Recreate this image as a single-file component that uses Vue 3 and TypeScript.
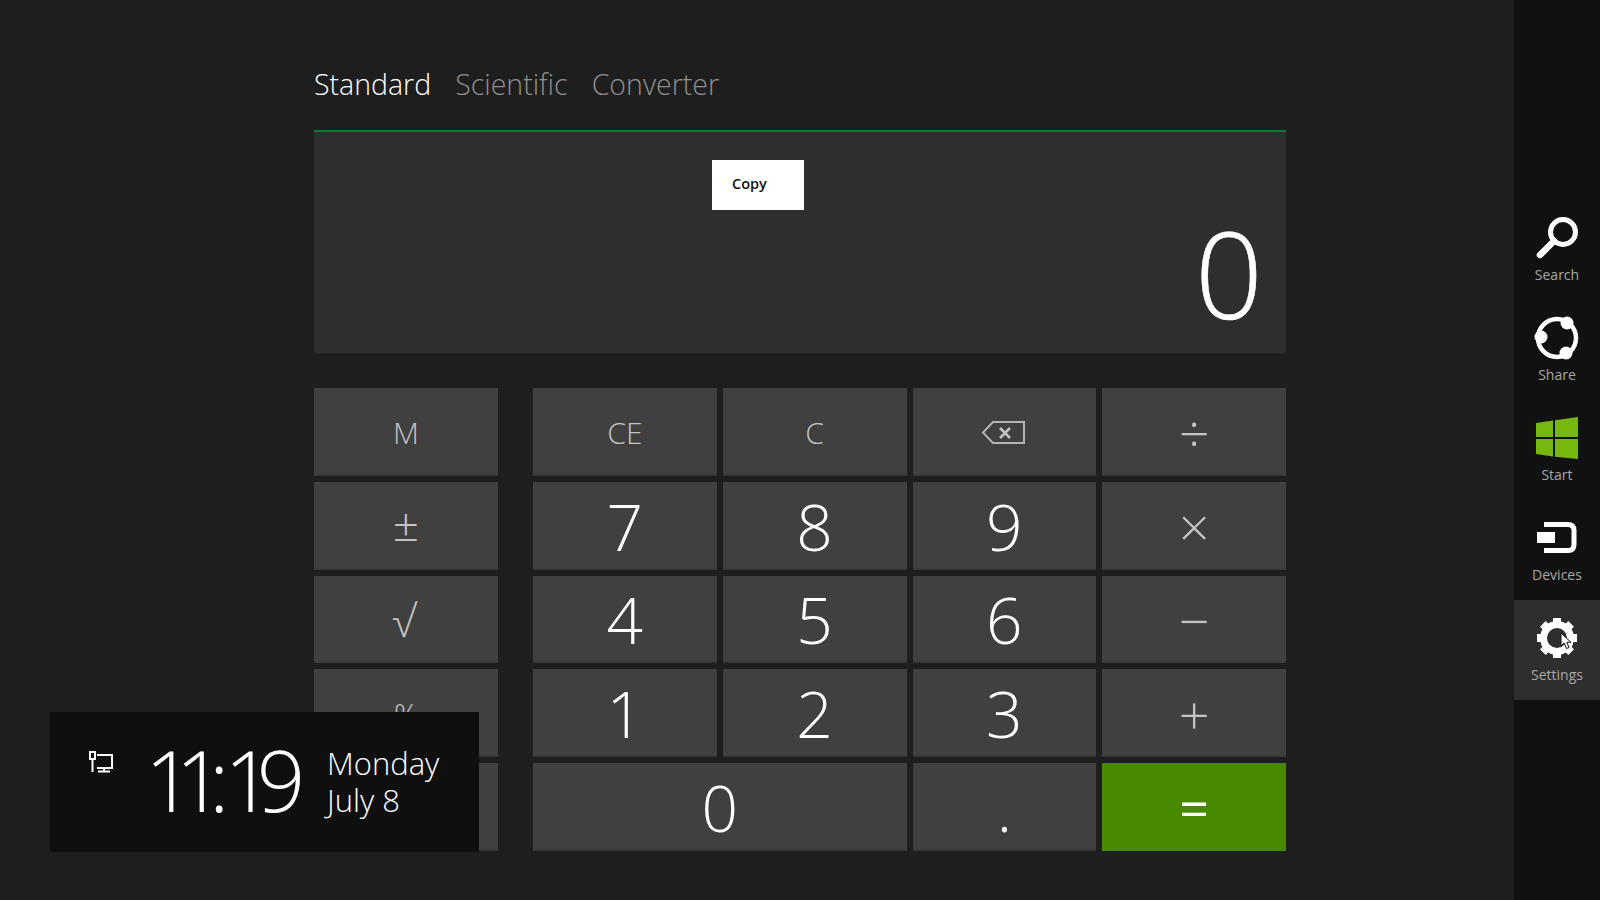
<template>
  <div class="screen">
    <div class="app-area">
      <nav class="tabs">
        <span v-for="(t, i) in tabs" :key="t" class="tab" :class="{ active: i === 0 }">{{ t }}</span>
      </nav>

      <section class="display">
        <div class="copy-menu">Copy</div>
        <div class="value">0</div>
      </section>

      <div class="keypad">
        <div class="memory">
          <button v-for="(k, i) in memoryKeys" :key="i" class="key op" :class="memoryClass(k)">{{ k }}</button>
        </div>
        <div class="main-keys">
          <button
            v-for="k in mainKeys"
            :key="k.label"
            class="key"
            :class="[k.kind, { wide: k.label === '0' }]"
          >
            <svg v-if="k.label === 'back'" class="back-icon" viewBox="0 0 44 24" width="44" height="24">
              <path d="M43 2H12L2 12.500 12 23H43Z" fill="none" stroke="#b4b4b4" stroke-width="2" />
              <path d="M19 8l10 10M29 8L19 18" fill="none" stroke="#c4c4c4" stroke-width="2.500" />
            </svg>
            <template v-else>{{ k.label }}</template>
          </button>
        </div>
      </div>
    </div>

    <aside class="charms">
      <div v-for="c in charms" :key="c" class="charm" :class="{ hover: c === 'Settings' }">
        <svg viewBox="0 0 50 50" width="50" height="50" class="charm-icon">
          <g v-if="c === 'Search'">
            <circle cx="31" cy="18" r="12.500" fill="none" stroke="#fff" stroke-width="5" />
            <path d="M22 27L8 41" stroke="#fff" stroke-width="6.500" stroke-linecap="round" />
          </g>
          <g v-else-if="c === 'Share'">
            <circle cx="25" cy="24" r="19" fill="none" stroke="#fff" stroke-width="4.500" />
            <circle cx="35" cy="9" r="6.500" fill="#fff" />
            <circle cx="9" cy="23" r="6.500" fill="#fff" />
            <circle cx="34" cy="39" r="6.500" fill="#fff" />
          </g>
          <g v-else-if="c === 'Start'" fill="#76b80f">
            <path d="M4 9L21 6.500V23H4Z" />
            <path d="M23 6.200L46 3V23H23Z" />
            <path d="M4 25H21V42.500L4 40Z" />
            <path d="M23 25H46V45L23 42.800Z" />
          </g>
          <g v-else-if="c === 'Devices'">
            <path d="M12 10.500H36Q42 10.500 42 16.500V30.500Q42 36.500 36 36.500H12" fill="none" stroke="#fff" stroke-width="5" />
            <rect x="5" y="18" width="18" height="11" fill="#fff" />
          </g>
          <g v-else>
            <circle cx="25" cy="24" r="13.500" fill="none" stroke="#fff" stroke-width="7" />
            <rect
              v-for="a in gearTeeth"
              :key="a"
              x="21"
              y="4"
              width="8"
              height="8"
              fill="#fff"
              :transform="`rotate(${a} 25 24)`"
            />
          </g>
        </svg>
        <span class="charm-label">{{ c }}</span>
        <svg v-if="c === 'Settings'" class="cursor" viewBox="0 0 12 18" width="12" height="18">
          <path d="M1 1V14L4.200 11 6.500 16.500 9 15.500 6.800 10.300H11Z" fill="#fff" stroke="#111" stroke-width="1" />
        </svg>
      </div>
    </aside>

    <div class="clock">
      <svg class="net-icon" viewBox="0 0 24 22" width="24" height="22">
        <rect x="1" y="1" width="5" height="7" fill="none" stroke="#fff" stroke-width="2" />
        <path d="M3.500 8V21M8 4H23V17H8M15 17V20M9 20.500H21" fill="none" stroke="#fff" stroke-width="2" />
      </svg>
      <div class="time"><span>11</span><span class="colon">:</span><span class="tail">19</span></div>
      <div class="date">
        <div>Monday</div>
        <div>July 8</div>
      </div>
    </div>
  </div>
</template>

<script setup lang="ts">
type Key = { label: string; kind: string }

const tabs = ['Standard', 'Scientific', 'Converter']
const memoryKeys = ['M', '±', '√', '%', '']
const gearTeeth = [0, 45, 90, 135, 180, 225, 270, 315]

const mainKeys: Key[] = [
  { label: 'CE', kind: 'op' },
  { label: 'C', kind: 'op' },
  { label: 'back', kind: 'op' },
  { label: '÷', kind: 'op sym' },
  { label: '7', kind: 'num' },
  { label: '8', kind: 'num' },
  { label: '9', kind: 'num' },
  { label: '×', kind: 'op sym' },
  { label: '4', kind: 'num' },
  { label: '5', kind: 'num' },
  { label: '6', kind: 'num' },
  { label: '−', kind: 'op sym' },
  { label: '1', kind: 'num' },
  { label: '2', kind: 'num' },
  { label: '3', kind: 'num' },
  { label: '+', kind: 'op sym' },
  { label: '0', kind: 'num' },
  { label: '.', kind: 'num' },
  { label: '=', kind: 'equals' },
]

const charms = ['Search', 'Share', 'Start', 'Devices', 'Settings']

function memoryClass(k: string) {
  if (k === '±') return 'plusminus'
  if (k === '√') return 'root'
  return ''
}
</script>

<style>
html,
body {
  margin: 0;
  background: #1e1e1e;
}
</style>

<style scoped>
.screen {
  position: relative;
  display: flex;
  width: 1600px;
  height: 900px;
  overflow: hidden;
  background: #1e1e1e;
  font-family: 'Open Sans', 'Liberation Sans', sans-serif;
  color: #fff;
}

.app-area {
  width: 972px;
  margin-left: 314px;
  margin-right: 228px;
}

.tabs {
  display: flex;
  gap: 24px;
  height: 130px;
  padding-top: 64px;
  box-sizing: border-box;
  font-size: 28.500px;
  font-weight: 300;
  line-height: 40px;
}

.tab {
  color: #8f8f8f;
}

.tab.active {
  color: #fff;
}

.display {
  position: relative;
  display: flex;
  justify-content: flex-end;
  align-items: flex-end;
  height: 223px;
  box-sizing: border-box;
  padding: 0 23px 20px 0;
  background: #2e2e2e;
  border-top: 2px solid #0c7a2c;
}

.copy-menu {
  position: absolute;
  left: 398px;
  top: 28px;
  width: 92px;
  height: 50px;
  box-sizing: border-box;
  padding-left: 20px;
  background: #fff;
  color: #111;
  font-size: 14.500px;
  font-weight: 600;
  line-height: 48px;
}

.value {
  font-size: 119px;
  font-weight: 300;
  line-height: 119px;
  -webkit-text-stroke: 0.6px #fff;
}

.keypad {
  display: flex;
  gap: 35px;
  margin-top: 35px;
}

.memory {
  display: grid;
  grid-auto-rows: 87.750px;
  gap: 6px;
  width: 184px;
}

.main-keys {
  display: grid;
  grid-template-columns: repeat(4, 1fr);
  grid-auto-rows: 87.750px;
  gap: 6px;
  width: 753px;
}

.key {
  display: flex;
  align-items: center;
  justify-content: center;
  padding: 3px 0 0;
  border: none;
  border-bottom: 2px solid #383838;
  background: #404040;
  font-family: inherit;
  font-weight: 300;
}

.key.op {
  color: #c4c4c4;
  font-size: 30px;
}

.key.plusminus {
  padding: 0 0 3px;
  font-size: 46px;
}

.key.root {
  padding: 3px 4px 0 0;
  font-size: 44px;
}

.key.sym {
  font-size: 54px;
}

.key.num {
  color: #fff;
  font-size: 64px;
}

.key.wide {
  grid-column: span 2;
}

.key.equals {
  padding: 0;
  background: #478a00;
  border-bottom: none;
  color: #fff;
  font-size: 52px;
  font-weight: 400;
}

.charms {
  display: flex;
  flex-direction: column;
  width: 86px;
  flex-shrink: 0;
  padding-top: 200px;
  box-sizing: border-box;
  background: #111;
}

.charm {
  position: relative;
  display: flex;
  flex-direction: column;
  align-items: center;
  height: 100px;
  padding-top: 14px;
  box-sizing: border-box;
}

.charm.hover {
  background: #2e2e2e;
}

.charm-icon {
  display: block;
}

.charm-label {
  margin-top: 1px;
  color: #a8a8a8;
  font-size: 14px;
  line-height: 20px;
}

.cursor {
  position: absolute;
  left: 46px;
  top: 32px;
}

.clock {
  position: absolute;
  left: 50px;
  top: 712px;
  display: flex;
  width: 429px;
  height: 140px;
  background: #0f0f0f;
}

.net-icon {
  margin: 39px 0 0 39px;
}

.time {
  width: 154px;
  margin-left: 32px;
  margin-top: 17px;
  font-size: 85px;
  font-weight: 300;
  line-height: 100px;
  letter-spacing: -18px;
  white-space: nowrap;
}

.colon {
  margin: 0 13px 0 3px;
}

.tail {
  letter-spacing: -16px;
}

.date {
  margin-left: 28px;
  margin-top: 33px;
  font-size: 31px;
  font-weight: 300;
  line-height: 37px;
}

.back-icon {
  display: block;
  margin-left: -2px;
}
</style>
